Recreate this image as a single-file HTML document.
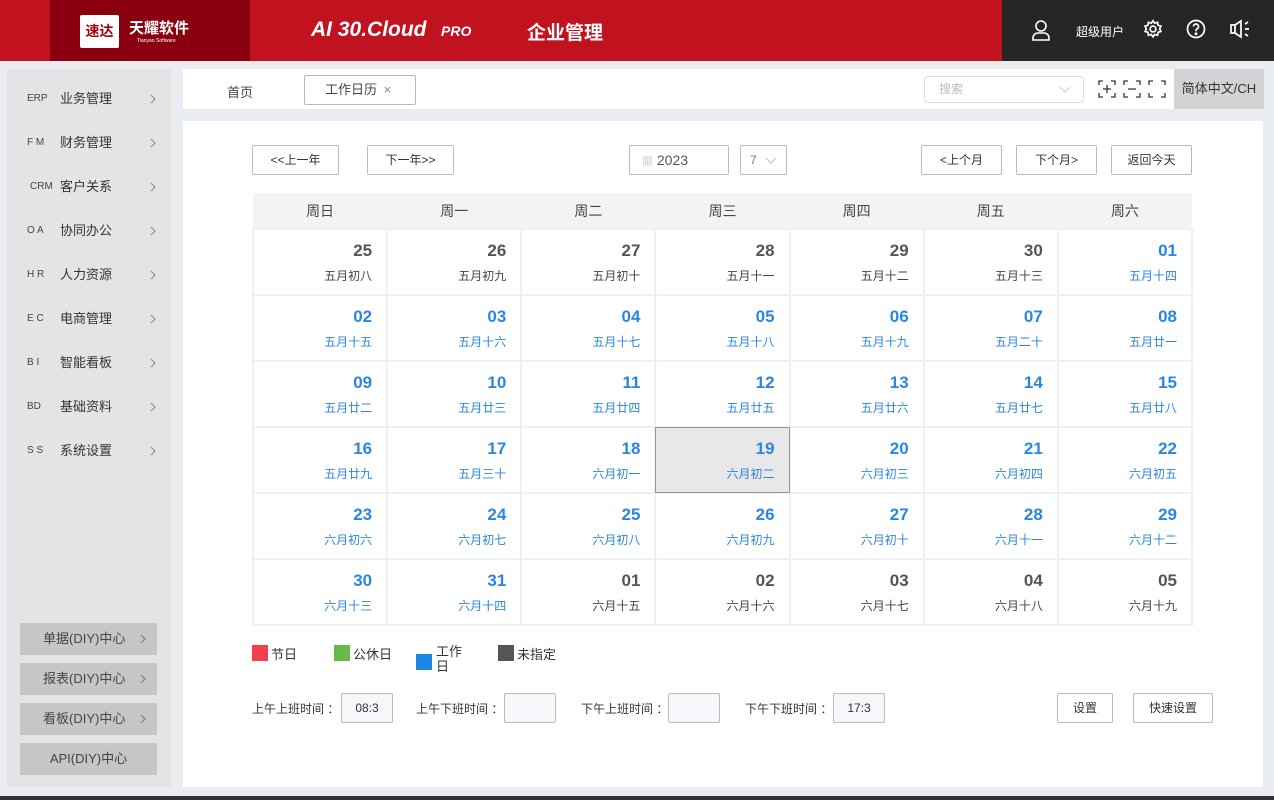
<!DOCTYPE html>
<html><head><meta charset="utf-8"><style>
*{margin:0;padding:0;box-sizing:border-box}
body{width:1274px;height:800px;overflow:hidden;background:#e9ecf1;font-family:"Liberation Sans","Noto Sans CJK SC",sans-serif;font-size:13px;color:#333;position:relative}
.abs{position:absolute}
#hdr{left:0;top:0;width:1274px;height:61px;background:#c0121f}
#dark{left:1002px;top:0;width:272px;height:61px;background:#262626}
.btn{position:absolute;border:1px solid #bbb;border-radius:2px;background:#fff;height:30px;line-height:28px;text-align:center;font-size:12px;color:#333}
.side{position:absolute;left:7px;top:69px;width:164px;height:718px;background:#e4e4e4}
.mi{position:absolute;left:7px;width:164px;height:20px;line-height:20px;font-size:13px;color:#333}
.mi .ab{position:absolute;left:20px;top:0;font-size:10px;color:#444}
.mi .t{position:absolute;left:53px;top:0}
.mi svg{position:absolute;left:143px;top:5px}
.dv{position:absolute;left:20px;width:137px;height:32px;background:#c6c6c6;line-height:32px;font-size:13px;color:#444}
.dv svg{position:absolute;left:120px;top:11px}
table{border-collapse:collapse;position:absolute;left:252px;top:193px;width:941px;table-layout:fixed}
th{height:36px;background:#f3f3f3;font-weight:normal;font-size:14px;color:#444}
td{height:66px;border:2px solid #edf0f5;text-align:right;padding-right:14px;vertical-align:top}
td b{display:block;font-size:17px;margin-top:11px;color:#555}
td span{display:block;font-size:12px;margin-top:6px;color:#444}
td.w b,td.w span{color:#2b86e0}
td.sel{background:#e8e8e8;outline:1px solid #999;outline-offset:-1px}
.lg{position:absolute;width:16px;height:16px}
.ti{position:absolute;font-size:12px;color:#333}
.inp{position:absolute;width:52px;height:30px;border:1px solid #bbb;border-radius:2px;background:#f5f7fa;font-size:12px;line-height:28px;text-align:center}
</style></head><body>
<div id="hdr" class="abs"></div>
<div class="abs" style="left:50px;top:0;width:200px;height:61px;background:#8a0010"></div>
<div class="abs" style="left:80px;top:15px;width:39px;height:33px;background:#fff;border-radius:2px;color:#a00010;font-weight:bold;font-size:14px;line-height:33px;text-align:center">速达</div>
<div class="abs" style="left:129px;top:17px;color:#fff;font-size:15px;font-weight:bold">天耀软件</div>
<div class="abs" style="left:137px;top:38px;color:#fff;font-size:5px">Tianyao Software</div>
<div class="abs" style="left:311px;top:18px;color:#fff;font-size:21px;font-style:italic;font-weight:bold">AI 30.Cloud</div>
<div class="abs" style="left:441px;top:23px;color:#fff;font-size:14px;font-style:italic;font-weight:bold">PRO</div>
<div class="abs" style="left:527px;top:18px;color:#fff;font-size:19px;font-weight:bold">企业管理</div>
<div id="dark" class="abs"></div>
<svg class="abs" style="left:1030px;top:19px" width="22" height="22" viewBox="0 0 22 22" fill="none" stroke="#fff" stroke-width="1.6"><circle cx="11" cy="7" r="5"/><path d="M3 21v-2a5 5 0 0 1 5-5h6a5 5 0 0 1 5 5v2z"/></svg>
<div class="abs" style="left:1076px;top:23px;color:#fff;font-size:12px">超级用户</div>
<svg class="abs" style="left:1143px;top:19px" width="20" height="20" viewBox="0 0 24 24" fill="none" stroke="#fff" stroke-width="2"><circle cx="12" cy="12" r="3.5"/><path d="M12 2l2 3 3.5-1 .5 3.5 3.5 1-1.5 3.5 1.5 3-3.5 1-.5 3.5-3.5-1-2 3-2-3-3.5 1-.5-3.5-3.5-1 1.5-3-1.5-3.5 3.5-1 .5-3.5 3.5 1z"/></svg>
<svg class="abs" style="left:1186px;top:19px" width="20" height="20" viewBox="0 0 20 20" fill="none" stroke="#fff" stroke-width="1.7"><circle cx="10" cy="10" r="8.5"/><path d="M7.5 7.5a2.5 2.5 0 1 1 3.5 2.3c-.7.4-1 .9-1 1.7v.8"/><circle cx="10" cy="14.8" r=".6" fill="#fff"/></svg>
<svg class="abs" style="left:1229px;top:19px" width="22" height="20" viewBox="0 0 22 20" fill="none" stroke="#fff" stroke-width="1.7"><path d="M2 6h4l6-4v16l-6-4H2z M6 6v8"/><path d="M16 5l3-2M16 10h4M16 15l3 2"/></svg>

<div class="side"></div>
<div class="mi" style="top:89px"><span class="ab">ERP</span><span class="t">业务管理</span><svg width="6" height="10" viewBox="0 0 6 10" fill="none" stroke="#888"><path d="M1 1l4 4-4 4"/></svg></div>
<div class="mi" style="top:133px"><span class="ab">F M</span><span class="t">财务管理</span><svg width="6" height="10" viewBox="0 0 6 10" fill="none" stroke="#888"><path d="M1 1l4 4-4 4"/></svg></div>
<div class="mi" style="top:177px"><span class="ab" style="left:23px">CRM</span><span class="t">客户关系</span><svg width="6" height="10" viewBox="0 0 6 10" fill="none" stroke="#888"><path d="M1 1l4 4-4 4"/></svg></div>
<div class="mi" style="top:221px"><span class="ab">O A</span><span class="t">协同办公</span><svg width="6" height="10" viewBox="0 0 6 10" fill="none" stroke="#888"><path d="M1 1l4 4-4 4"/></svg></div>
<div class="mi" style="top:265px"><span class="ab">H R</span><span class="t">人力资源</span><svg width="6" height="10" viewBox="0 0 6 10" fill="none" stroke="#888"><path d="M1 1l4 4-4 4"/></svg></div>
<div class="mi" style="top:309px"><span class="ab">E C</span><span class="t">电商管理</span><svg width="6" height="10" viewBox="0 0 6 10" fill="none" stroke="#888"><path d="M1 1l4 4-4 4"/></svg></div>
<div class="mi" style="top:353px"><span class="ab">B I</span><span class="t">智能看板</span><svg width="6" height="10" viewBox="0 0 6 10" fill="none" stroke="#888"><path d="M1 1l4 4-4 4"/></svg></div>
<div class="mi" style="top:397px"><span class="ab">BD</span><span class="t">基础资料</span><svg width="6" height="10" viewBox="0 0 6 10" fill="none" stroke="#888"><path d="M1 1l4 4-4 4"/></svg></div>
<div class="mi" style="top:441px"><span class="ab">S S</span><span class="t">系统设置</span><svg width="6" height="10" viewBox="0 0 6 10" fill="none" stroke="#888"><path d="M1 1l4 4-4 4"/></svg></div>
<div class="dv" style="top:623px"><span style="margin-left:23px">单据(DIY)中心</span><svg width="6" height="10" viewBox="0 0 6 10" fill="none" stroke="#777"><path d="M1 1l4 4-4 4"/></svg></div>
<div class="dv" style="top:663px"><span style="margin-left:23px">报表(DIY)中心</span><svg width="6" height="10" viewBox="0 0 6 10" fill="none" stroke="#777"><path d="M1 1l4 4-4 4"/></svg></div>
<div class="dv" style="top:703px"><span style="margin-left:23px">看板(DIY)中心</span><svg width="6" height="10" viewBox="0 0 6 10" fill="none" stroke="#777"><path d="M1 1l4 4-4 4"/></svg></div>
<div class="dv" style="top:743px;text-align:center">API(DIY)中心</div>

<div class="abs" style="left:183px;top:69px;width:1080px;height:40px;background:#fff"></div>
<div class="abs" style="left:227px;top:82px;font-size:13px;color:#444">首页</div>
<div class="abs" style="left:304px;top:75px;width:112px;height:30px;border:1px solid #bbb;border-radius:2px;font-size:13px;color:#444;line-height:28px;padding-left:20px">工作日历 <span style="color:#888;margin-left:3px">×</span></div>
<div class="abs" style="left:924px;top:76px;width:160px;height:27px;border:1px solid #ddd;border-radius:4px;font-size:12px;color:#bbb;line-height:25px;padding-left:14px">搜索<svg style="position:absolute;right:12px;top:9px" width="12" height="7" viewBox="0 0 12 7" fill="none" stroke="#ccc"><path d="M1 1l5 5 5-5"/></svg></div>
<svg class="abs" style="left:1098px;top:80px" width="70" height="18" viewBox="0 0 70 18" fill="none" stroke="#333" stroke-width="1.3"><path d="M1 5V1h4M13 1h4v4M17 13v4h-4M5 17H1v-4M5 9h8M9 5v8"/><path d="M26 5V1h4M38 1h4v4M42 13v4h-4M30 17h-4v-4M30 9h8"/><path d="M51 5V1h4M63 1h4v4M67 13v4h-4M55 17h-4v-4"/></svg>
<div class="abs" style="left:1174px;top:69px;width:90px;height:40px;background:#d3d3d3;font-size:13px;color:#333;line-height:40px;text-align:center">简体中文/CH</div>

<div class="abs" style="left:183px;top:121px;width:1080px;height:666px;background:#fff"></div>
<div class="btn" style="left:252px;top:145px;width:87px">&lt;&lt;上一年</div>
<div class="btn" style="left:367px;top:145px;width:87px">下一年&gt;&gt;</div>
<div class="btn" style="left:629px;top:145px;width:100px;text-align:left;padding-left:12px;color:#555;font-size:14px"><span style="color:#bbb;font-size:11px">▦</span> 2023</div>
<div class="btn" style="left:740px;top:145px;width:47px;color:#777;text-align:left;padding-left:9px">7<svg style="position:absolute;left:24px;top:11px" width="12" height="7" viewBox="0 0 12 7" fill="none" stroke="#bbb"><path d="M1 1l5 5 5-5"/></svg></div>
<div class="btn" style="left:921px;top:145px;width:81px">&lt;上个月</div>
<div class="btn" style="left:1016px;top:145px;width:81px">下个月&gt;</div>
<div class="btn" style="left:1111px;top:145px;width:81px">返回今天</div>

<table>
<tr><th>周日</th><th>周一</th><th>周二</th><th>周三</th><th>周四</th><th>周五</th><th>周六</th></tr>
<tr><td><b>25</b><span>五月初八</span></td><td><b>26</b><span>五月初九</span></td><td><b>27</b><span>五月初十</span></td><td><b>28</b><span>五月十一</span></td><td><b>29</b><span>五月十二</span></td><td><b>30</b><span>五月十三</span></td><td class="w"><b>01</b><span>五月十四</span></td></tr>
<tr><td class="w"><b>02</b><span>五月十五</span></td><td class="w"><b>03</b><span>五月十六</span></td><td class="w"><b>04</b><span>五月十七</span></td><td class="w"><b>05</b><span>五月十八</span></td><td class="w"><b>06</b><span>五月十九</span></td><td class="w"><b>07</b><span>五月二十</span></td><td class="w"><b>08</b><span>五月廿一</span></td></tr>
<tr><td class="w"><b>09</b><span>五月廿二</span></td><td class="w"><b>10</b><span>五月廿三</span></td><td class="w"><b>11</b><span>五月廿四</span></td><td class="w"><b>12</b><span>五月廿五</span></td><td class="w"><b>13</b><span>五月廿六</span></td><td class="w"><b>14</b><span>五月廿七</span></td><td class="w"><b>15</b><span>五月廿八</span></td></tr>
<tr><td class="w"><b>16</b><span>五月廿九</span></td><td class="w"><b>17</b><span>五月三十</span></td><td class="w"><b>18</b><span>六月初一</span></td><td class="w sel"><b>19</b><span>六月初二</span></td><td class="w"><b>20</b><span>六月初三</span></td><td class="w"><b>21</b><span>六月初四</span></td><td class="w"><b>22</b><span>六月初五</span></td></tr>
<tr><td class="w"><b>23</b><span>六月初六</span></td><td class="w"><b>24</b><span>六月初七</span></td><td class="w"><b>25</b><span>六月初八</span></td><td class="w"><b>26</b><span>六月初九</span></td><td class="w"><b>27</b><span>六月初十</span></td><td class="w"><b>28</b><span>六月十一</span></td><td class="w"><b>29</b><span>六月十二</span></td></tr>
<tr><td class="w"><b>30</b><span>六月十三</span></td><td class="w"><b>31</b><span>六月十四</span></td><td><b>01</b><span>六月十五</span></td><td><b>02</b><span>六月十六</span></td><td><b>03</b><span>六月十七</span></td><td><b>04</b><span>六月十八</span></td><td><b>05</b><span>六月十九</span></td></tr>
</table>

<div class="lg" style="left:252px;top:645px;background:#f33f4f"></div><div class="ti" style="left:271px;top:644px;font-size:13px">节日</div>
<div class="lg" style="left:334px;top:645px;background:#6ab84a"></div><div class="ti" style="left:353px;top:644px;font-size:13px">公休日</div>
<div class="lg" style="left:416px;top:654px;background:#1e87e6"></div><div class="ti" style="left:436px;top:644px;font-size:13px;line-height:15px">工作<br>日</div>
<div class="lg" style="left:498px;top:645px;background:#555"></div><div class="ti" style="left:517px;top:644px;font-size:13px">未指定</div>

<div class="ti" style="left:252px;top:700px">上午上班时间 ：</div><div class="inp" style="left:341px;top:693px">08:3</div>
<div class="ti" style="left:416px;top:700px">上午下班时间 ：</div><div class="inp" style="left:504px;top:693px"></div>
<div class="ti" style="left:581px;top:700px">下午上班时间 ：</div><div class="inp" style="left:668px;top:693px"></div>
<div class="ti" style="left:745px;top:700px">下午下班时间 ：</div><div class="inp" style="left:833px;top:693px">17:3</div>
<div class="btn" style="left:1057px;top:693px;width:56px">设置</div>
<div class="btn" style="left:1133px;top:693px;width:80px">快速设置</div>
<div class="abs" style="left:0;top:796px;width:1274px;height:4px;background:#333"></div>
</body></html>
